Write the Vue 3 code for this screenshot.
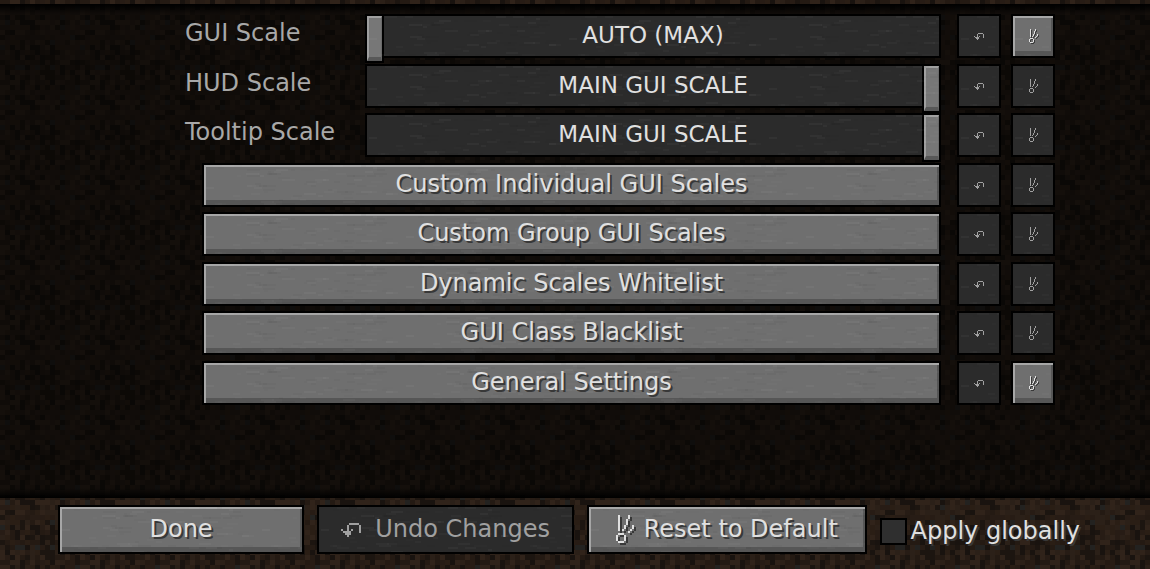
<script setup>
import { ref } from 'vue'

function seeded(seed) {
  let s = seed
  return () => {
    s = (s * 1664525 + 1013904223) % 4294967296
    return s / 4294967296
  }
}

const rnd = seeded(77)
const soil = ['#2a1e15', '#241a13', '#1c1510', '#30231a', '#271c15', '#19130f', '#2b2018', '#232220']
const dirt = []
for (let y = 0; y < 16; y++) {
  for (let x = 0; x < 16; x++) {
    dirt.push({ x: x * 5, y: y * 5, fill: soil[Math.floor(rnd() * 7.3)] })
  }
}

const streaks = []
for (let i = 0; i < 90; i++) {
  streaks.push({
    x: Math.floor(rnd() * 185),
    y: Math.floor(rnd() * 20) * 2,
    w: 4 + Math.floor(rnd() * 10),
    fill: rnd() > 0.5 ? '#fff' : '#000',
    o: 0.01 + rnd() * 0.025,
  })
}

const rows = ref([
  { label: 'GUI Scale', text: 'AUTO (MAX)', slider: true, value: 0, reset: true },
  { label: 'HUD Scale', text: 'MAIN GUI SCALE', slider: true, value: 10, reset: false },
  { label: 'Tooltip Scale', text: 'MAIN GUI SCALE', slider: true, value: 10, reset: false },
  { label: 'Custom Individual GUI Scales', reset: false },
  { label: 'Custom Group GUI Scales', reset: false },
  { label: 'Dynamic Scales Whitelist', reset: false },
  { label: 'GUI Class Blacklist', reset: false },
  { label: 'General Settings', reset: true },
])
const applyGlobally = ref(false)
</script>

<template>
  <div class="page">
    <svg class="fill" aria-hidden="true">
      <defs>
        <pattern id="dirt" width="80" height="80" patternUnits="userSpaceOnUse">
          <rect v-for="(d, i) in dirt" :key="i" :x="d.x" :y="d.y" width="5" height="5" :fill="d.fill" />
        </pattern>
        <pattern id="stone" width="200" height="40" patternUnits="userSpaceOnUse">
          <rect v-for="(s, i) in streaks" :key="i" :x="s.x" :y="s.y" :width="s.w" height="2" :fill="s.fill" :fill-opacity="s.o" />
        </pattern>
        <symbol id="undo" viewBox="0 0 10 8">
          <path d="M4 1h5v1h-5zM9 2h1v4h-1zM3 2h1v6h-1zM0 4h1v1h-1zM5 4h1v1h-1zM1 5h4v1h-4zM2 6h1v1h-1zM4 6h1v1h-1z" />
        </symbol>
        <symbol id="reset" viewBox="0 0 9 14">
          <path d="M1 0h1v8h-1zM6 0h1v2h-1zM5 2h1v3h-1zM4 5h1v2h-1zM3 7h1v1h-1zM8 5h1v2h-1zM7 7h1v1h-1zM6 8h1v1h-1zM1 9h3v1h-3zM0 10h1v3h-1zM4 10h1v3h-1zM1 13h3v1h-3z" />
        </symbol>
      </defs>
      <rect width="100%" height="100%" fill="url(#dirt)" />
    </svg>

    <main class="list">
      <div v-for="(row, i) in rows" :key="i" class="row">
        <template v-if="row.slider">
          <label class="name" :for="'scale-' + i">{{ row.label }}</label>
          <div class="slider">
            <input :id="'scale-' + i" v-model="row.value" type="range" min="0" max="10">
            <svg class="fill" aria-hidden="true"><rect width="100%" height="100%" fill="url(#stone)" /></svg>
            <output class="value" :for="'scale-' + i">{{ row.text }}</output>
          </div>
        </template>
        <button v-else type="button" class="btn wide">
          <svg class="fill" aria-hidden="true"><rect width="100%" height="100%" fill="url(#stone)" /></svg>
          <span>{{ row.label }}</span>
        </button>
        <button type="button" class="btn square" disabled aria-label="Undo">
          <svg class="fill" aria-hidden="true"><rect width="100%" height="100%" fill="url(#stone)" /></svg>
          <svg class="undo-small" aria-hidden="true"><use href="#undo" /></svg>
        </button>
        <button type="button" class="btn square last" :disabled="!row.reset" aria-label="Reset">
          <svg class="fill" aria-hidden="true"><rect width="100%" height="100%" fill="url(#stone)" /></svg>
          <svg class="reset-small" aria-hidden="true"><use href="#reset" /></svg>
        </button>
      </div>
    </main>

    <footer class="footer">
      <button type="button" class="btn done">
        <svg class="fill" aria-hidden="true"><rect width="100%" height="100%" fill="url(#stone)" /></svg>
        <span>Done</span>
      </button>
      <button type="button" class="btn undo-all" disabled>
        <svg class="fill" aria-hidden="true"><rect width="100%" height="100%" fill="url(#stone)" /></svg>
        <svg class="undo-big" aria-hidden="true"><use href="#undo" /></svg>
        <span>Undo Changes</span>
      </button>
      <button type="button" class="btn reset-all">
        <svg class="fill" aria-hidden="true"><rect width="100%" height="100%" fill="url(#stone)" /></svg>
        <svg class="reset-big" aria-hidden="true"><use href="#reset" /></svg>
        <span>Reset to Default</span>
      </button>
      <label class="check">
        <input v-model="applyGlobally" type="checkbox">
        <span>Apply globally</span>
      </label>
    </footer>
  </div>
</template>

<style>
body { background: #1e150f; }
</style>

<style scoped>
.page {
  position: relative;
  display: flex;
  flex-direction: column;
  min-height: 100vh;
  box-sizing: border-box;
  padding-top: 4px;
  font-family: "DejaVu Sans", sans-serif;
  font-size: 24px;
  line-height: 28px;
  color: #e0e0e0;
}
svg {
  shape-rendering: crispEdges;
}
.fill {
  position: absolute;
  inset: 0;
  width: 100%;
  height: 100%;
  pointer-events: none;
}
.list {
  position: relative;
  flex: 1;
  display: flex;
  flex-direction: column;
  justify-content: space-between;
  padding: 10px 95px 93px 185px;
  background:
    linear-gradient(#000, transparent 10px),
    linear-gradient(to top, #000, transparent 10px),
    rgba(0, 0, 0, 0.57);
}
.row {
  display: flex;
  height: 44px;
}
.name {
  width: 180px;
  padding-top: 5px;
  box-sizing: border-box;
  color: #a8a8a8;
  white-space: nowrap;
}
.slider {
  position: relative;
  flex: 1;
  height: 44px;
  box-sizing: border-box;
  border: 2px solid #000;
  background: #2b2b2b;
}
.slider input {
  -webkit-appearance: none;
  appearance: none;
  display: block;
  width: 100%;
  height: 40px;
  margin: 0;
  background: transparent;
}
.slider input::-webkit-slider-runnable-track {
  height: 40px;
}
.slider input::-webkit-slider-thumb {
  -webkit-appearance: none;
  box-sizing: border-box;
  width: 15px;
  height: 45px;
  background: #777;
  border: 2px solid #a0a0a0;
  border-right: 1px solid #6a6a6a;
  border-bottom: 4px solid #585858;
  box-shadow: 0 0 0 2px #000;
}
.value {
  position: absolute;
  inset: 0;
  text-align: center;
  line-height: 38px;
  font-size: 23px;
  color: #e0e0e0;
  pointer-events: none;
}
.btn {
  position: relative;
  display: flex;
  align-items: center;
  justify-content: center;
  box-sizing: border-box;
  height: 44px;
  padding: 0 0 2px;
  border: 2px solid #000;
  border-radius: 0;
  background: #6f6f6f;
  box-shadow: inset 2px 2px #a6a6a6, inset -2px -5px #565656;
  font: inherit;
  color: #e0e0e0;
  text-shadow: 2px 2px #383838;
  white-space: nowrap;
}
.btn > * {
  flex: none;
}
.btn span {
  position: relative;
}
.btn:disabled {
  background: #2b2b2b;
  box-shadow: none;
  color: #a0a0a0;
  text-shadow: none;
}
.btn svg {
  fill: currentColor;
}
.wide {
  flex: 1;
  margin-left: 17px;
}
.square {
  width: 44px;
  margin-left: 16px;
  padding: 0;
}
.last {
  margin-left: 10px;
}
.undo-small {
  width: 10px;
  height: 8px;
}
.reset-small {
  width: 9px;
  height: 14px;
}
.btn:enabled .reset-small {
  filter: drop-shadow(1px 1px #383838);
}
.btn:enabled .reset-big {
  filter: drop-shadow(2px 2px #383838);
}
.footer {
  position: relative;
  display: flex;
  align-items: flex-start;
  padding: 7px 70px 15px 58px;
  min-height: 71px;
  box-sizing: border-box;
}
.footer .btn {
  height: 49px;
}
.done {
  flex: 246 1 0;
  margin-right: 13px;
}
.undo-all {
  flex: 257 1 0;
  margin-right: 13px;
}
.reset-all {
  flex: 280 1 0;
  margin-right: 13px;
}
.undo-big {
  width: 20px;
  height: 16px;
  margin-right: 14px;
}
.reset-big {
  width: 18px;
  height: 28px;
  margin-right: 10px;
}
.check {
  display: flex;
  align-items: center;
  padding-top: 12px;
  white-space: nowrap;
  text-shadow: 2px 2px #383838;
}
.check input {
  -webkit-appearance: none;
  appearance: none;
  width: 27px;
  height: 27px;
  margin: 0 4px 0 0;
  border: 2px solid #000;
  background: #2f2f2f;
}
.check input:checked {
  background: #a6a6a6;
}
</style>
